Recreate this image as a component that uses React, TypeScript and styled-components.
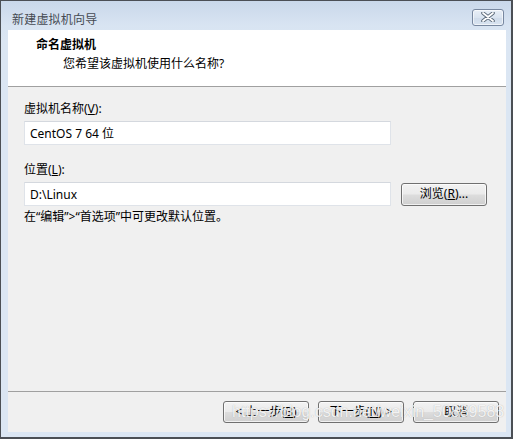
import React from "react";
import styled, { createGlobalStyle } from "styled-components";

const Global = createGlobalStyle`
  html, body { margin: 0; padding: 0; background: #ffffff; }
  * { box-sizing: border-box; }
`;

const FONT = `"Noto Sans", "Noto Sans CJK SC", sans-serif`;

const Window = styled.div`
  position: relative;
  width: 513px;
  height: 439px;
  border: 1px solid #4b4f55;
  border-right-width: 2px;
  border-bottom-width: 2px;
  background: linear-gradient(180deg, #c9d8ea 0px, #d8e4f2 24px, #dbe6f3 40px, #dbe6f3 100%);
  display: flex;
  flex-direction: column;
  font-family: ${FONT};
  font-size: 12px;
  color: #000;
`;

const TitleBar = styled.div`
  height: 29px;
  padding: 6px 7px 0 11px;
  display: flex;
  align-items: center;
  justify-content: space-between;
`;

const TitleText = styled.span`
  color: #454a52;
  font-size: 12px;
  letter-spacing: 0.2px;
`;

const CloseButton = styled.div`
  width: 32px;
  height: 17px;
  margin-bottom: 3px;
  border: 1px solid #7888a0;
  border-radius: 3px;
  background: linear-gradient(180deg, #e9eff7 0%, #dae4f0 50%, #cfdbea 51%, #d9e4f1 100%);
  box-shadow: inset 0 0 0 1px rgba(255, 255, 255, 0.6);
  display: flex;
  align-items: center;
  justify-content: center;
`;

const Client = styled.div`
  flex: 1;
  margin: 0 5px 5px 7px;
  background: #f0f0f0;
  display: flex;
  flex-direction: column;
`;

const Header = styled.div`
  height: 57px;
  background: #ffffff;
  border-bottom: 1px solid #a0a0a0;
  padding: 7px 0 0 28px;
  display: flex;
  flex-direction: column;
`;

const HeaderTitle = styled.div`
  font-weight: bold;
  font-size: 12px;
  line-height: 16px;
  color: #000;
`;

const HeaderSub = styled.div`
  font-size: 12px;
  line-height: 16px;
  margin-top: 3px;
  padding-left: 27px;
  color: #000;
`;

const Body = styled.div`
  flex: 1;
  padding: 14px 0 0 16px;
  display: flex;
  flex-direction: column;
`;

const Label = styled.div<{ $gap?: number }>`
  line-height: 16px;
  margin-top: ${(p) => p.$gap ?? 0}px;
  color: #000;
`;

const Row = styled.div`
  display: flex;
  align-items: center;
  gap: 10px;
  margin-top: 4px;
`;

const TextBox = styled.div`
  width: 367px;
  height: 24px;
  background: #ffffff;
  border: 1px solid #dfe3e9;
  border-top-color: #d4d8de;
  padding-left: 5px;
  display: flex;
  align-items: center;
  font-size: 12px;
  color: #000;
`;

const Note = styled.div`
  line-height: 16px;
  margin-top: 3px;
  color: #000;
`;

const Footer = styled.div`
  height: 41px;
  border-top: 1px solid #a0a0a0;
  padding: 9px 7px 0 0;
  display: flex;
  justify-content: flex-end;
  gap: 9px;
`;

const Button = styled.div<{ $w?: number; $h?: number }>`
  width: ${(p) => p.$w ?? 86}px;
  height: ${(p) => p.$h ?? 22}px;
  border: 1px solid #707070;
  border-radius: 3px;
  background: linear-gradient(180deg, #f2f2f2 0%, #ebebeb 48%, #dddddd 52%, #cfcfcf 100%);
  box-shadow: inset 0 0 0 1px rgba(255, 255, 255, 0.7);
  display: flex;
  align-items: center;
  justify-content: center;
  font-size: 12px;
  color: #000;
  line-height: 1;
`;

const Watermark = styled.div`
  position: absolute;
  left: 231px;
  top: 402px;
  font-family: "Liberation Sans", Arial, sans-serif;
  font-size: 16px;
  color: rgba(255, 255, 255, 0.85);
  text-shadow: 0 0 1px rgba(120, 120, 120, 0.55);
  pointer-events: none;
  white-space: nowrap;
`;

const CloseIcon = () => (
  <svg width="14" height="10" viewBox="0 0 14 10">
    <path
      d="M2 1 L12 9 M12 1 L2 9"
      stroke="#5a6878"
      strokeWidth="3.6"
      strokeLinecap="round"
      fill="none"
    />
    <path
      d="M2 1 L12 9 M12 1 L2 9"
      stroke="#ffffff"
      strokeWidth="1.8"
      strokeLinecap="round"
      fill="none"
    />
  </svg>
);

export default function App() {
  return (
    <>
      <Global />
      <Window>
        <TitleBar>
          <TitleText>新建虚拟机向导</TitleText>
          <CloseButton>
            <CloseIcon />
          </CloseButton>
        </TitleBar>
        <Client>
          <Header>
            <HeaderTitle>命名虚拟机</HeaderTitle>
            <HeaderSub>您希望该虚拟机使用什么名称?</HeaderSub>
          </Header>
          <Body>
            <Label>
              虚拟机名称(<u>V</u>):
            </Label>
            <Row>
              <TextBox>CentOS 7 64 位</TextBox>
            </Row>
            <Label $gap={17}>
              位置(<u>L</u>):
            </Label>
            <Row>
              <TextBox>D:\Linux</TextBox>
              <Button $w={86} $h={23}>
                浏览(<u>R</u>)...
              </Button>
            </Row>
            <Note>在“编辑”&gt;“首选项”中可更改默认位置。</Note>
          </Body>
          <Footer>
            <Button>&lt; 上一步(<u>B</u>)</Button>
            <Button>下一步(<u>N</u>) &gt;</Button>
            <Button>取消</Button>
          </Footer>
        </Client>
        <Watermark>https://blog.csdn.net/weixin_50889583</Watermark>
      </Window>
    </>
  );
}
